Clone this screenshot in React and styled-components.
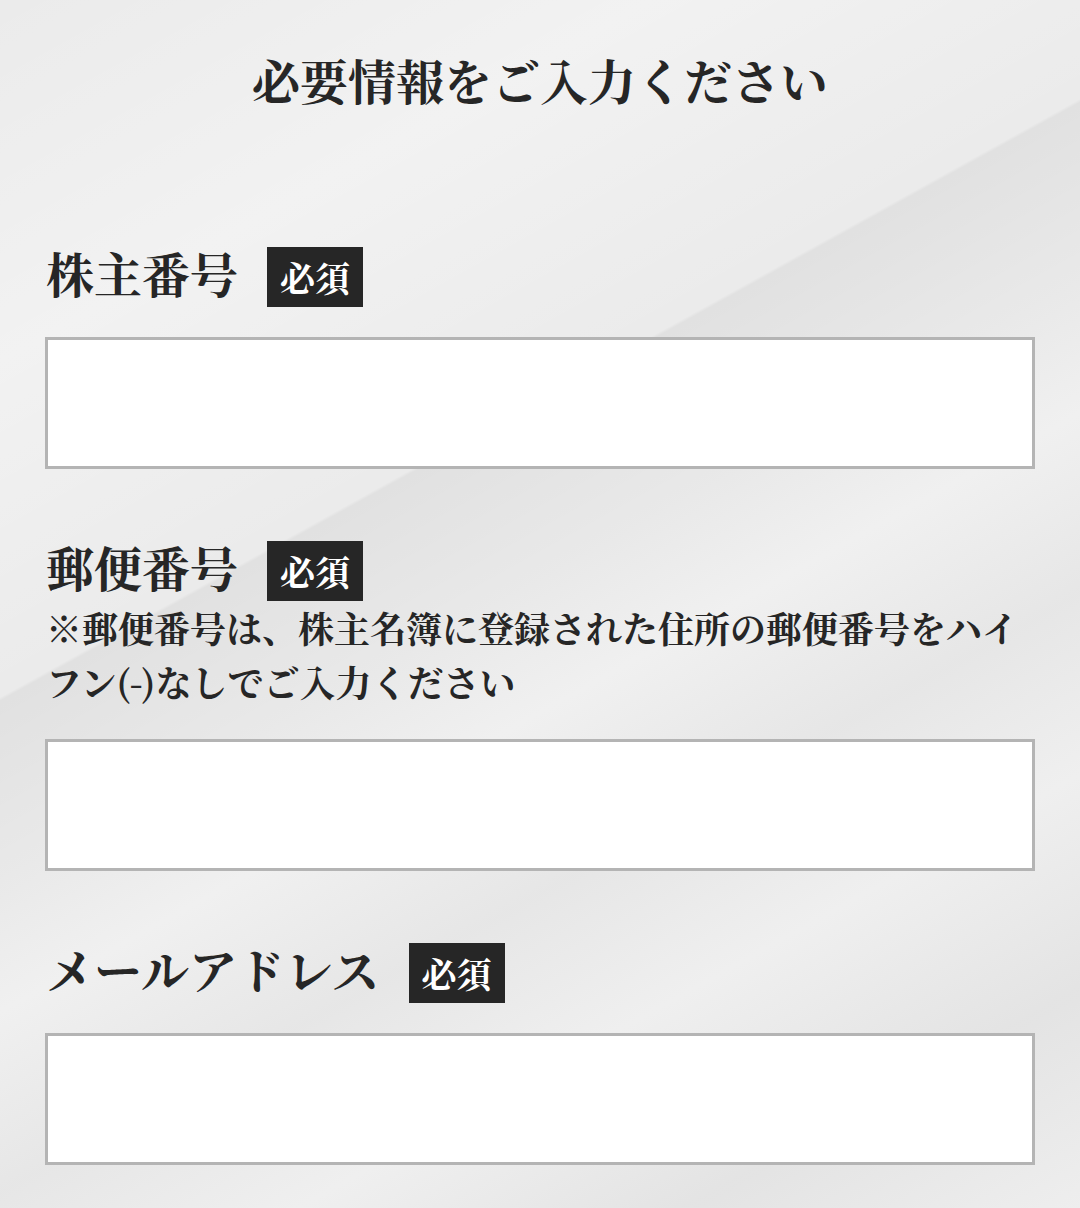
import React from "react";
import styled, { createGlobalStyle } from "styled-components";

const Global = createGlobalStyle`
  html, body { margin: 0; padding: 0; }
  body {
    font-family: "Noto Serif CJK JP", "Noto Sans CJK JP", "Noto Sans", serif;
    color: #262626;
  }
  * { box-sizing: border-box; }
`;

const Page = styled.div`
  min-height: 1208px;
  padding: 44px 45px 40px;
  background:
    linear-gradient(151deg,
      rgba(255,255,255,0) 0%,
      rgba(255,255,255,0.35) 20%,
      rgba(255,255,255,0) 38.6%,
      rgba(0,0,0,0.045) 38.8%,
      rgba(0,0,0,0.01) 48%,
      rgba(255,255,255,0.25) 56%,
      rgba(0,0,0,0.02) 66%,
      rgba(255,255,255,0.2) 76%,
      rgba(0,0,0,0.03) 88%,
      rgba(255,255,255,0.15) 100%),
    #ebebeb;
`;

const Title = styled.h1`
  margin: 0;
  text-align: center;
  font-size: 48px;
  line-height: 72px;
  font-weight: 700;
  letter-spacing: 0;
`;

const Form = styled.form`
  margin-top: 131px;
  display: flex;
  flex-direction: column;
  gap: 72px;
`;

const Field = styled.div`
  display: flex;
  flex-direction: column;
`;

const Header = styled.div`
  display: flex;
  align-items: center;
  gap: 29px;
  height: 60px;
`;

const Label = styled.span`
  font-size: 48px;
  line-height: 60px;
  font-weight: 700;
  color: #262626;
  padding-left: 1px;
  margin-top: -8px;
`;

const Badge = styled.span`
  display: inline-flex;
  align-items: center;
  justify-content: center;
  width: 96px;
  height: 60px;
  background: #262626;
  color: #ffffff;
  font-size: 35px;
  font-weight: 700;
`;

const Note = styled.p`
  margin: 0;
  padding-left: 1px;
  font-size: 36px;
  line-height: 54px;
  font-weight: 700;
  color: #262626;
`;

const Input = styled.input`
  display: block;
  width: 100%;
  height: 132px;
  margin-top: 30px;
  border: 3px solid #b4b4b4;
  background: #ffffff;
  border-radius: 0;
  outline: none;
  font-size: 36px;
  padding: 0 20px;
`;

const fields = [
  { label: "株主番号", name: "holder" },
  {
    label: "郵便番号",
    name: "zip",
    note: "※郵便番号は、株主名簿に登録された住所の郵便番号をハイフン(-)なしでご入力ください",
  },
  { label: "メールアドレス", name: "email", type: "email" },
];

export default function App() {
  return (
    <>
      <Global />
      <Page>
        <Title>必要情報をご入力ください</Title>
        <Form onSubmit={(e) => e.preventDefault()}>
          {fields.map((f) => (
            <Field key={f.name}>
              <Header>
                <Label>{f.label}</Label>
                <Badge>必須</Badge>
              </Header>
              {f.note && <Note>{f.note}</Note>}
              <Input name={f.name} type={f.type || "text"} />
            </Field>
          ))}
        </Form>
      </Page>
    </>
  );
}
